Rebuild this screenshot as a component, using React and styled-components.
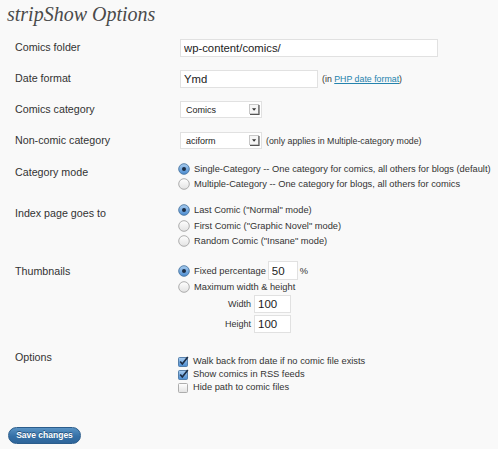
import React from "react";
import styled, { createGlobalStyle } from "styled-components";

const GlobalStyle = createGlobalStyle`
  html, body {
    margin: 0;
    padding: 0;
    background: #f9f9f9;
  }
  body {
    font-family: "Liberation Sans", Arial, sans-serif;
    color: #333;
  }
`;

const Page = styled.div`
  width: 498px;
  height: 449px;
  box-sizing: border-box;
  padding-top: 2px;
  overflow: hidden;
`;

const Title = styled.h2`
  margin: 0 0 6px 7px;
  font-family: "Liberation Serif", Georgia, serif;
  font-style: italic;
  font-weight: normal;
  font-size: 20px;
  line-height: 24px;
  color: #4a4a4a;
`;

const Row = styled.div`
  display: grid;
  grid-template-columns: 165px 1fr;
  padding-left: 15px;
  align-items: ${(p) => (p.$center ? "center" : "start")};
  height: ${(p) => (p.$h ? `${p.$h}px` : "auto")};
  padding-top: ${(p) => p.$top || 0}px;
`;

const Label = styled.div`
  font-size: 10.7px;
  line-height: 13px;
  color: #333;
  padding-top: ${(p) => p.$offset || 0}px;
`;

const Field = styled.div`
  display: flex;
  flex-direction: column;
  padding-top: ${(p) => p.$top || 0}px;
`;

const Inline = styled.div`
  display: flex;
  align-items: center;
  gap: 4px;
`;

const TextInput = styled.input`
  box-sizing: border-box;
  width: ${(p) => p.$w}px;
  height: ${(p) => p.$hgt || 18}px;
  border: 1px solid #e1e1e1;
  background: #fff;
  padding: 0 3px;
  margin: 0 ${(p) => p.$mr || 0}px 0 ${(p) => p.$ml || 0}px;
  font-family: "Liberation Sans", Arial, sans-serif;
  font-size: ${(p) => p.$fs || 11.3}px;
  color: #222;
  outline: none;
`;

const Note = styled.span`
  font-size: 8.8px;
  color: #333;
  white-space: nowrap;
`;

const Link = styled.a`
  color: #2583ad;
  text-decoration: underline;
`;

const Select = styled.div`
  box-sizing: border-box;
  width: 82px;
  height: 17px;
  border: 1px solid #e1e1e1;
  background: #fff;
  display: flex;
  align-items: center;
  justify-content: space-between;
  padding: 0 1px 0 5px;
  font-size: 9px;
  color: #222;
`;

const Option = styled.label`
  display: flex;
  align-items: center;
  height: ${(p) => p.$lh}px;
  font-size: 9.3px;
  color: #333;
  white-space: nowrap;
  margin-left: -2px;

  svg {
    flex: none;
    margin-right: 4px;
  }
`;

const SizeRow = styled.div`
  display: grid;
  grid-template-columns: 71px 37px;
  column-gap: 3px;
  align-items: center;
  margin-top: ${(p) => p.$mt}px;
`;

const SizeLabel = styled.span`
  text-align: right;
  font-size: 9px;
  color: #333;
`;

const Footer = styled.div`
  padding: 30.5px 0 0 8px;
`;

const Button = styled.button`
  box-sizing: border-box;
  width: 73px;
  height: 17px;
  padding: 0;
  border: 1px solid #2b5d8c;
  border-radius: 9px;
  background: linear-gradient(#5a93c4, #3570a6 55%, #2e659a);
  color: #fff;
  font-family: "Liberation Sans", Arial, sans-serif;
  font-weight: bold;
  font-size: 8.5px;
  text-shadow: 0 -1px 0 #24507a;
  cursor: pointer;
`;

const SelectArrow = () => (
  <svg width="11" height="11" viewBox="0 0 11 11">
    <rect x="0.5" y="0.5" width="9" height="9" fill="#f6f6f6" stroke="#c8c8c8" />
    <path d="M10 1 V10.5 H1" stroke="#555" strokeWidth="1.2" fill="none" />
    <path d="M3 4.2 H7.2 L5.1 6.8 Z" fill="#333" />
  </svg>
);

const Radio = ({ on }) => (
  <svg width="12" height="12" viewBox="0 0 12 12">
    <defs>
      <linearGradient id="rOn" x1="0" y1="0" x2="0" y2="1">
        <stop offset="0" stopColor="#a9cdf0" />
        <stop offset="1" stopColor="#4a8bd0" />
      </linearGradient>
      <linearGradient id="rOff" x1="0" y1="0" x2="0" y2="1">
        <stop offset="0" stopColor="#ffffff" />
        <stop offset="1" stopColor="#e2e2e2" />
      </linearGradient>
    </defs>
    <circle
      cx="6"
      cy="6"
      r="5.3"
      fill={on ? "url(#rOn)" : "url(#rOff)"}
      stroke={on ? "#4a76a3" : "#a5a5a5"}
      strokeWidth="0.9"
    />
    {on && <circle cx="6" cy="6" r="2" fill="#1c2d45" />}
  </svg>
);

const Check = ({ on }) => (
  <svg width="11" height="11" viewBox="0 0 11 11">
    <defs>
      <linearGradient id="cOn" x1="0" y1="0" x2="0" y2="1">
        <stop offset="0" stopColor="#a9cdf0" />
        <stop offset="1" stopColor="#4a8bd0" />
      </linearGradient>
      <linearGradient id="cOff" x1="0" y1="0" x2="0" y2="1">
        <stop offset="0" stopColor="#ffffff" />
        <stop offset="1" stopColor="#e2e2e2" />
      </linearGradient>
    </defs>
    <rect
      x="0.5"
      y="1.5"
      width="9"
      height="9"
      rx="1"
      fill={on ? "url(#cOn)" : "url(#cOff)"}
      stroke={on ? "#4a76a3" : "#a5a5a5"}
      strokeWidth="0.9"
    />
    {on && <path d="M2.2 5.5 L4.3 8 L9.8 1" stroke="#1c2d45" strokeWidth="1.7" fill="none" />}
  </svg>
);

const App = () => {
  return (
    <Page>
      <GlobalStyle />
      <Title>stripShow Options</Title>

      <Row $center $h={31}>
        <Label>Comics folder</Label>
        <Inline>
          <TextInput $w={258} defaultValue="wp-content/comics/" />
        </Inline>
      </Row>

      <Row $center $h={31}>
        <Label>Date format</Label>
        <Inline>
          <TextInput $w={138} defaultValue="Ymd" />
          <Note>
            (in <Link href="#">PHP date format</Link>)
          </Note>
        </Inline>
      </Row>

      <Row $center $h={31}>
        <Label>Comics category</Label>
        <Inline>
          <Select>
            Comics
            <SelectArrow />
          </Select>
        </Inline>
      </Row>

      <Row $center $h={31}>
        <Label>Non-comic category</Label>
        <Inline>
          <Select>
            aciform
            <SelectArrow />
          </Select>
          <Note>(only applies in Multiple-category mode)</Note>
        </Inline>
      </Row>

      <Row $top={5}>
        <Label $offset={5}>Category mode</Label>
        <Field>
          <Option $lh={15}>
            <Radio on />
            Single-Category -- One category for comics, all others for blogs (default)
          </Option>
          <Option $lh={15}>
            <Radio />
            Multiple-Category -- One category for blogs, all others for comics
          </Option>
        </Field>
      </Row>

      <Row $top={11.5}>
        <Label $offset={4.5}>Index page goes to</Label>
        <Field>
          <Option $lh={15.5}>
            <Radio on />
            Last Comic ("Normal" mode)
          </Option>
          <Option $lh={15.5}>
            <Radio />
            First Comic ("Graphic Novel" mode)
          </Option>
          <Option $lh={15.5}>
            <Radio />
            Random Comic ("Insane" mode)
          </Option>
        </Field>
      </Row>

      <Row $top={12}>
        <Label $offset={3.5}>Thumbnails</Label>
        <Field>
          <Option $lh={19}>
            <Radio on />
            Fixed percentage
            <TextInput $w={30} $hgt={19} $fs={11.5} $ml={2} $mr={2} defaultValue="50" />
            %
          </Option>
          <Option $lh={14}>
            <Radio />
            Maximum width &amp; height
          </Option>
          <SizeRow $mt={1}>
            <SizeLabel>Width</SizeLabel>
            <TextInput $w={37} $fs={11.5} defaultValue="100" />
          </SizeRow>
          <SizeRow $mt={2}>
            <SizeLabel>Height</SizeLabel>
            <TextInput $w={37} $fs={11.5} defaultValue="100" />
          </SizeRow>
        </Field>
      </Row>

      <Row $top={17.5}>
        <Label>Options</Label>
        <Field $top={4}>
          <Option $lh={13}>
            <Check on />
            Walk back from date if no comic file exists
          </Option>
          <Option $lh={13}>
            <Check on />
            Show comics in RSS feeds
          </Option>
          <Option $lh={13}>
            <Check />
            Hide path to comic files
          </Option>
        </Field>
      </Row>

      <Footer>
        <Button type="button">Save changes</Button>
      </Footer>
    </Page>
  );
};

export default App;
